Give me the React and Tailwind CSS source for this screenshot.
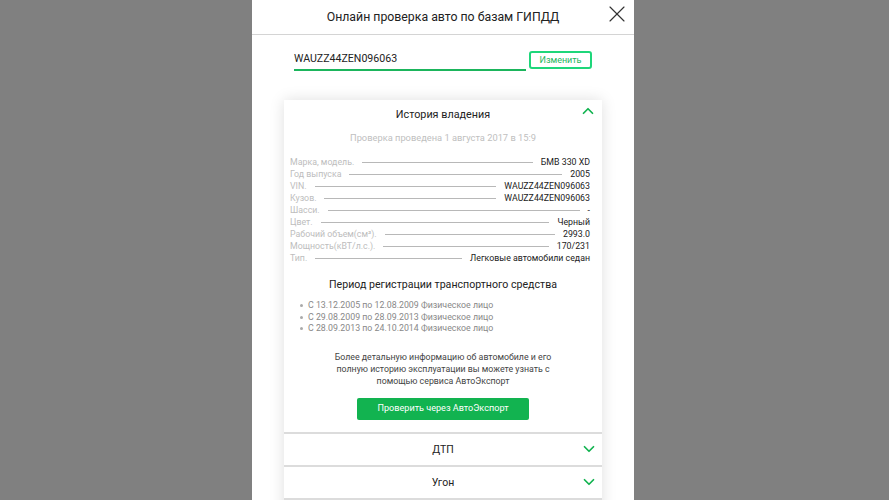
import { ChevronUp, ChevronDown, X } from "lucide-react";

const specs = [
  ["Марка, модель.", "БМВ 330 XD"],
  ["Год выпуска", "2005"],
  ["VIN.", "WAUZZ44ZEN096063"],
  ["Кузов.", "WAUZZ44ZEN096063"],
  ["Шасси.", "-"],
  ["Цвет.", "Черный"],
  ["Рабочий объем(см³).", "2993.0"],
  ["Мощность(кВТ/л.с.).", "170/231"],
  ["Тип.", "Легковые автомобили седан"],
];

const periods = [
  "С 13.12.2005 по 12.08.2009 Физическое лицо",
  "С 29.08.2009 по 28.09.2013 Физическое лицо",
  "С 28.09.2013 по 24.10.2014 Физическое лицо",
];

const Section = ({ title }) => (
  <div className="relative flex h-[33px] items-center justify-center border-t-2 border-[#dcdcdc] bg-white">
    <span className="text-[10.5px] text-[#222]">{title}</span>
    <ChevronDown className="absolute right-[4px] top-[6px] h-[18px] w-[18px] text-[#12b350]" strokeWidth={2.3} />
  </div>
);

export default function App() {
  return (
    <div
      className="h-[500px] w-full overflow-hidden bg-[#808080]"
      style={{ fontFamily: "Roboto, 'Liberation Sans', sans-serif" }}
    >
      <div className="ml-[252px] h-full w-[382px] bg-white">
        {/* Header */}
        <div className="relative flex h-[35px] items-center justify-center border-b border-[#d4d4d4]">
          <span className="text-[12.3px] text-[#222]">Онлайн проверка авто по базам ГИПДД</span>
          <X className="absolute right-[3px] top-0 h-[28px] w-[28px] text-[#333]" strokeWidth={1} />
        </div>

        {/* VIN input */}
        <div className="flex items-start px-[42px] pt-[16px]">
          <div className="w-[232px] border-b-2 border-[#1bb55c] pb-[3px] pt-[1px] text-[10.6px] leading-[14px] text-[#222]">
            WAUZZ44ZEN096063
          </div>
          <button className="ml-[3px] h-[18px] w-[63px] rounded-[3px] border-2 border-[#1ed67a] text-[9px] leading-none text-[#1bb55c]">
            Изменить
          </button>
        </div>

        {/* Card */}
        <div className="mx-[32px] mt-[29px] bg-white shadow-[0_0_14px_rgba(0,0,0,0.13)]">
          <div className="pb-[12px]">
            <div className="relative flex h-[31px] items-center justify-center">
              <span className="text-[10.8px] text-[#222]">История владения</span>
              <ChevronUp className="absolute right-[5px] top-[2px] h-[18px] w-[18px] text-[#12b350]" strokeWidth={2.3} />
            </div>
            <div className="mt-[1px] text-center text-[9.3px] leading-[12px] text-[#c0c0c0]">
              Проверка проведена 1 августа 2017 в 15:9
            </div>

            <div className="mt-[12px] pl-[6px] pr-[12px]">
              {specs.map(([label, value]) => (
                <div key={label} className="flex h-[12px] items-center text-[8.8px] leading-[12px]">
                  <span className="text-[#bdbdbd]">{label}</span>
                  <span className="mx-[8px] h-px flex-1 bg-[#b8b8b8]" />
                  <span className="text-[#222]">{value}</span>
                </div>
              ))}
            </div>

            <div className="mt-[14px] text-center text-[10.6px] leading-[14px] text-[#222]">
              Период регистрации транспортного средства
            </div>

            <ul className="mt-[8px] pl-[16px]">
              {periods.map((p) => (
                <li key={p} className="flex h-[11.5px] items-center text-[8.8px] text-[#888]">
                  <span className="mr-[5px] h-[3px] w-[3px] rounded-full bg-[#aaa]" />
                  {p}
                </li>
              ))}
            </ul>

            <p className="mx-auto mt-[16.5px] w-[224px] text-center text-[8.8px] leading-[12px] text-[#444]">
              Более детальную информацию об автомобиле и его полную историю эксплуатации вы можете узнать с помощью сервиса АвтоЭкспорт
            </p>

            <div className="mt-[11px] flex justify-center">
              <button className="h-[22px] w-[172px] rounded-[2px] bg-[#12b350] text-[9.1px] text-white">
                Проверить через АвтоЭкспорт
              </button>
            </div>
          </div>

          <Section title="ДТП" />
          <Section title="Угон" />
          <div className="h-[20px] border-t-2 border-[#dcdcdc]" />
        </div>
      </div>
    </div>
  );
}
